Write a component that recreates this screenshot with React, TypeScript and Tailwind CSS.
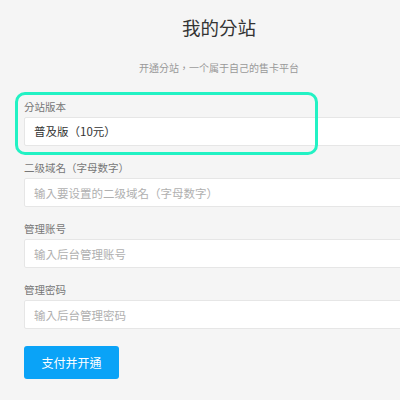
const fields = [
  { label: '二级域名（字母数字）', placeholder: '输入要设置的二级域名（字母数字）' },
  { label: '管理账号', placeholder: '输入后台管理账号' },
  { label: '管理密码', placeholder: '输入后台管理密码' },
];

export default function App() {
  return (
    <div
      className="relative h-[400px] w-[400px] overflow-hidden bg-[#f5f5f5]"
      style={{ fontFamily: '"Noto Sans CJK TC", "Noto Sans CJK SC", "Noto Sans", sans-serif' }}
    >
      <div className="ml-[24px] w-[390px] pt-[13px]">
        {/* Header */}
        <h1 className="text-center text-[18.5px] leading-[28px] text-[#333]">我的分站</h1>
        <p className="mt-[20px] text-center text-[10px] leading-[14px] text-[#999]">
          开通分站，一个属于自己的售卡平台
        </p>

        {/* Form */}
        <div className="mt-[25px] flex flex-col gap-[15px]">
          <div>
            <div className="mb-[3px] text-[10.5px] leading-[14px] text-[#777]">分站版本</div>
            <div className="flex h-[29px] items-center rounded-[2px] border border-[#e6e6e6] bg-white pl-[9px] text-[11.5px] text-[#333]">
              普及版（10元）
            </div>
          </div>
          {fields.map((f) => (
            <div key={f.label}>
              <div className="mb-[3px] text-[10.5px] leading-[14px] text-[#777]">{f.label}</div>
              <input
                className="block h-[29px] w-full rounded-[2px] border border-[#e6e6e6] bg-white pl-[9px] text-[11.5px] text-[#333] outline-none placeholder:text-[#b0b0b0]"
                placeholder={f.placeholder}
              />
            </div>
          ))}
        </div>

        <button className="mt-[17px] h-[33px] w-[95px] rounded-[3px] bg-[#0aa3f7] text-[12px] text-white">
          支付并开通
        </button>
      </div>

      {/* Highlight annotation */}
      <div className="pointer-events-none absolute left-[15px] top-[92px] h-[63px] w-[303px] rounded-[10px] border-[3px] border-[#22f2c4]" />
    </div>
  );
}
